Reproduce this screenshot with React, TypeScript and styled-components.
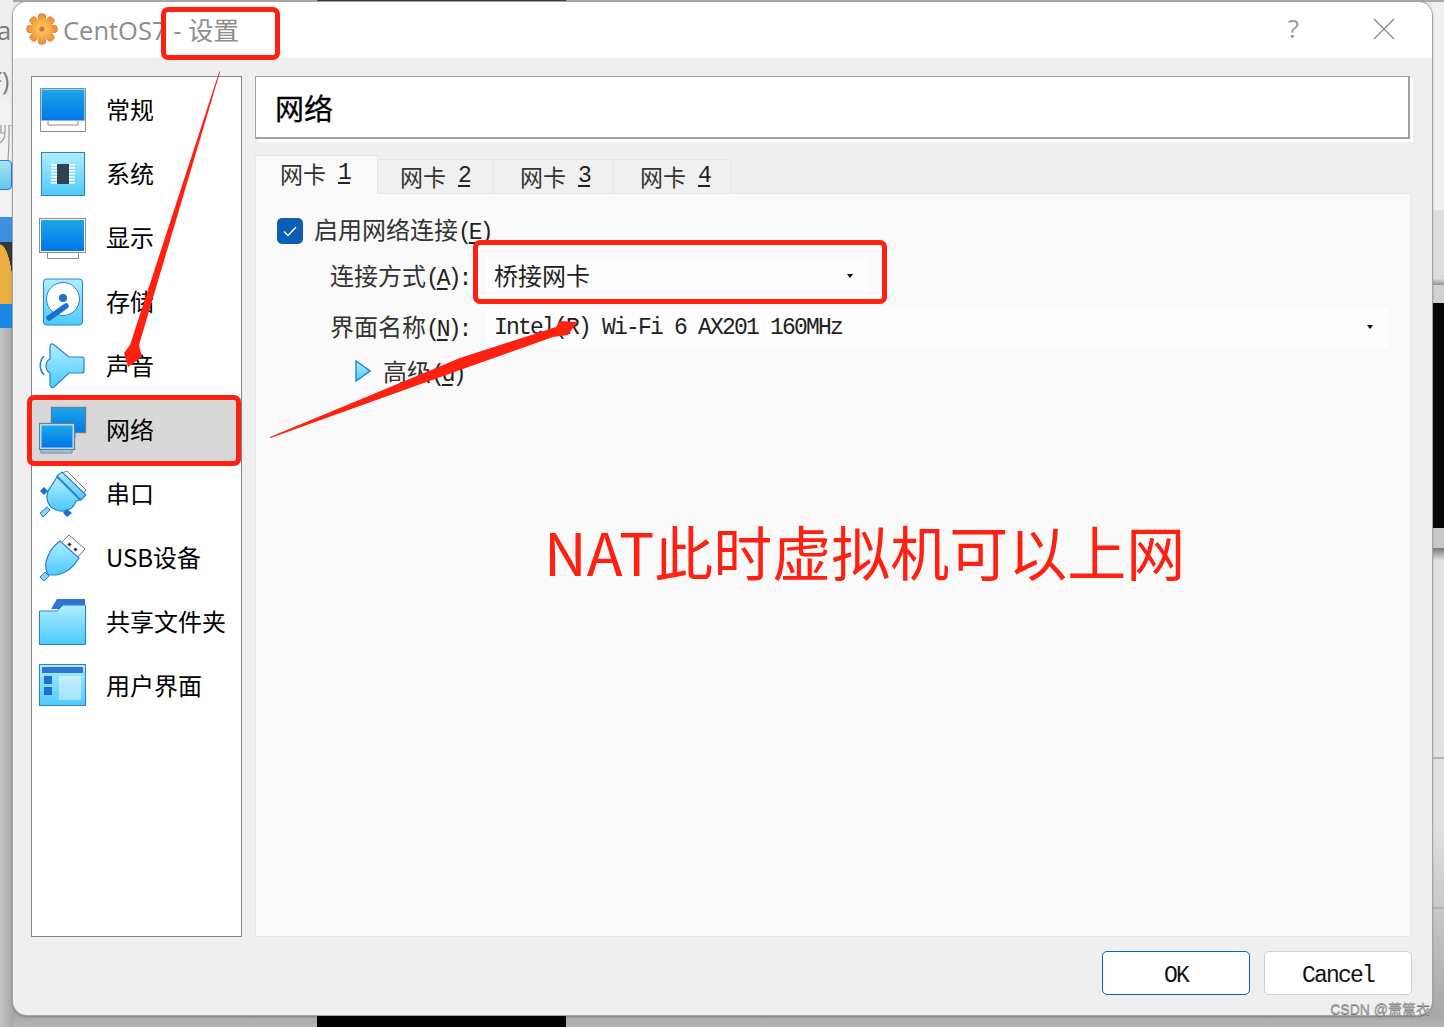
import React from "react";
import styled, { createGlobalStyle } from "styled-components";

const CJK = '"Noto Sans CJK SC", "Noto Sans", sans-serif';
const MONO = '"Liberation Mono", "Noto Sans CJK SC", monospace';

const GlobalStyle = createGlobalStyle`
  html, body { margin: 0; padding: 0; background: #c8c8c8; }
  body { font-family: ${CJK}; color: #111; }
  * { box-sizing: border-box; }
`;

const Desktop = styled.div`
  position: relative;
  width: 1444px;
  height: 1027px;
  overflow: hidden;
  padding: 2px 0 0 13px;
  background: linear-gradient(#e6e6e6, #e2e2e2 80%, #a8a8a8 98.8%, #b4b4b4);
`;

/* bits of the other windows that peek out around the dialog */
const Peek = styled.div<{ $x: number; $y: number; $w: number; $h: number; $bg: string }>`
  position: absolute;
  left: ${(p) => p.$x}px;
  top: ${(p) => p.$y}px;
  width: ${(p) => p.$w}px;
  height: ${(p) => p.$h}px;
  background: ${(p) => p.$bg};
`;

const PeekChip = styled.div`
  position: absolute;
  left: -8px;
  top: 160px;
  width: 20px;
  height: 30px;
  background: linear-gradient(#a8e4f4, #62c6ec);
  border: 1px solid #2a80d0;
  border-radius: 4px;
`;

const PeekFork = styled.svg`
  position: absolute;
  left: 0;
  top: 125px;
`;

const PeekText = styled.div<{ $y: number; $left: number }>`
  position: absolute;
  left: ${(p) => p.$left}px;
  top: ${(p) => p.$y}px;
  font: 25px "Open Sans", sans-serif;
  line-height: 30px;
  color: #7d7d7d;
  white-space: nowrap;
`;

const Window = styled.div`
  position: relative;
  display: flex;
  flex-direction: column;
  width: 1419px;
  height: 1013px;
  border-radius: 14px;
  overflow: hidden;
  background: #efefef;
  box-shadow: 0 0 0 1px #a4a4a4, 0 1px 2px 1px rgba(0, 0, 0, 0.25);
`;

const TitleBar = styled.header`
  display: flex;
  align-items: center;
  height: 56px;
  padding: 0 37px 2px 13px;
  background: #ffffff;
  color: #8d8d8d;
  font-family: "Open Sans", ${CJK};
  font-size: 25.5px;
`;

const TitleText = styled.span`
  margin-left: 5px;
  padding-bottom: 2px;
  white-space: pre;
`;

const TitleButtons = styled.div`
  display: flex;
  align-items: center;
  gap: 74px;
  margin-left: auto;
`;

const HelpMark = styled.span`
  padding-bottom: 3px;
  font-size: 26px;
  color: #9a9a9a;
`;

const Body = styled.main`
  flex: 1;
  display: flex;
  gap: 13px;
  padding: 18px 21px 0 18px;
  min-height: 0;
`;

const Sidebar = styled.nav`
  width: 211px;
  padding-top: 1px;
  background: #ffffff;
  border: 1px solid #80848c;
`;

const NavItem = styled.div<{ $active?: boolean }>`
  display: flex;
  align-items: center;
  gap: 19px;
  height: 64px;
  padding-left: 7px;
  font-size: 24px;
  background: ${(p) => (p.$active ? "#d8d8d8" : "transparent")};
  color: #000;
`;

const NavLabel = styled.span`
  padding-bottom: 4px;
`;

const Main = styled.section`
  flex: 1;
  display: flex;
  flex-direction: column;
  min-width: 0;
`;

const PageHeader = styled.div`
  display: flex;
  align-items: center;
  width: 1155px;
  height: 63px;
  padding-left: 19px;
  background: #ffffff;
  border: solid #a0a0a0;
  border-width: 1px 2px 2px 1px;
  box-shadow: 3px 3px 0 #ffffff;
  font-size: 29px;
  -webkit-text-stroke: 0.3px #000;
  color: #000;
`;

const TabBar = styled.div`
  display: flex;
  align-items: flex-end;
  height: 38px;
  margin-top: 16px;
  position: relative;
  z-index: 1;
`;

const Tab = styled.div<{ $active?: boolean; $w: number; $pad: number }>`
  display: flex;
  align-items: center;
  gap: 12px;
  width: ${(p) => p.$w}px;
  height: ${(p) => (p.$active ? "39px" : "35px")};
  margin-bottom: -1px;
  padding: 0 0 ${(p) => (p.$active ? "4px" : "1px")} ${(p) => p.$pad}px;
  background: ${(p) => (p.$active ? "#f9f9f9" : "#f0f0f0")};
  border: 1px solid #e6e6e6;
  border-left-width: ${(p) => (p.$active ? "1px" : "0")};
  border-bottom-color: ${(p) => (p.$active ? "#f9f9f9" : "#e6e6e6")};
  font-size: 23px;
  color: #333;
`;

const Hot = styled.span<{ $tight?: boolean }>`
  font-family: ${MONO};
  font-size: 23px;
  letter-spacing: ${(p) => (p.$tight ? "-3px" : "-1.8px")};
  color: #222;
  & u {
    text-underline-offset: 3px;
  }
`;

const Panel = styled.div`
  flex: 1;
  display: flex;
  flex-direction: column;
  padding: 23px 22px 0 21px;
  background: #f9f9f9;
  border: 1px solid #e6e6e6;
  font-size: 24px;
  color: #333;
`;

const CheckRow = styled.label`
  display: flex;
  align-items: center;
  gap: 11px;
  height: 27px;
`;

const CheckBox = styled.span`
  display: flex;
  align-items: center;
  justify-content: center;
  width: 26px;
  height: 26px;
  border-radius: 5px;
  background: #0a5fb4;
`;

const Caption = styled.span`
  padding-bottom: 4px;
  white-space: nowrap;
`;

const FieldRow = styled.div<{ $gap: number }>`
  display: flex;
  align-items: center;
  margin-top: ${(p) => p.$gap}px;
  padding-left: 53px;
`;

const FieldLabel = styled(Caption)`
  width: 156px;
`;

const Combo = styled.div<{ $wide?: boolean }>`
  position: relative;
  display: flex;
  align-items: center;
  justify-content: space-between;
  flex: ${(p) => (p.$wide ? "1" : "none")};
  width: ${(p) => (p.$wide ? "auto" : "382px")};
  height: ${(p) => (p.$wide ? "38px" : "39px")};
  padding: 0 15px 0 8px;
  background: #fdfdfd;
  color: #222;
`;

const ComboValue = styled.span<{ $mono?: boolean }>`
  font-family: ${(p) => (p.$mono ? MONO : CJK)};
  font-size: ${(p) => (p.$mono ? "23px" : "24px")};
  letter-spacing: ${(p) => (p.$mono ? "-1.8px" : "0")};
  padding-bottom: ${(p) => (p.$mono ? "0" : "4px")};
  white-space: pre;
`;

const ComboArrow = styled.span`
  width: 0;
  height: 0;
  border: 3px solid transparent;
  border-top: 4px solid #000;
  border-bottom: 0;
  margin-top: -2px;
`;

const Expander = styled.div`
  display: flex;
  align-items: center;
  gap: 12px;
  margin-top: 6px;
  padding-left: 78px;
`;

const ExpanderLabel = styled(Caption)`
  padding-bottom: 0;
`;

const Footer = styled.footer`
  display: flex;
  justify-content: flex-end;
  gap: 14px;
  height: 78px;
  padding: 14px 20px 20px 0;
`;

const DialogButton = styled.button<{ $primary?: boolean }>`
  width: 148px;
  height: 44px;
  padding: 5px 0 0;
  background: #ffffff;
  border: 1px solid ${(p) => (p.$primary ? "#0067c0" : "#d0d0d0")};
  border-radius: 5px;
  font-family: ${MONO};
  font-size: 23px;
  letter-spacing: -1.8px;
  color: #111;
`;

const Annotations = styled.div`
  position: absolute;
  inset: 0;
  z-index: 5;
  pointer-events: none;
`;

const RedBox = styled.div<{ $x: number; $y: number; $w: number; $h: number }>`
  position: absolute;
  left: ${(p) => p.$x}px;
  top: ${(p) => p.$y}px;
  width: ${(p) => p.$w}px;
  height: ${(p) => p.$h}px;
  border: 5px solid #fe2010;
  border-radius: 7px;
`;

const ArrowLayer = styled.svg`
  position: absolute;
  inset: 0;
`;

const BigNote = styled.div`
  position: absolute;
  left: 544px;
  top: 511px;
  font-family: ${CJK};
  font-size: 59px;
  line-height: 80px;
  color: #fe2010;
  white-space: nowrap;
`;

const Watermark = styled.div`
  position: absolute;
  right: 14px;
  bottom: 9px;
  font: 14px "Liberation Sans", ${CJK};
  color: #a6a6a6;
  text-shadow: 0 1px 0 #777;
  white-space: nowrap;
`;

const Ico = styled.svg`
  flex: none;
  display: block;
`;

const Defs = () => (
  <svg width="0" height="0" style={{ position: "absolute" }}>
    <defs>
      <linearGradient id="screen" x1="0" y1="0" x2="0" y2="1">
        <stop offset="0" stopColor="#1ca6e6" />
        <stop offset="1" stopColor="#0076ea" />
      </linearGradient>
      <linearGradient id="sky" x1="0" y1="0" x2="0" y2="1">
        <stop offset="0" stopColor="#b0eeff" />
        <stop offset="1" stopColor="#4ccafc" />
      </linearGradient>
      <linearGradient id="pale" x1="0" y1="0" x2="0" y2="1">
        <stop offset="0" stopColor="#c4f0fc" />
        <stop offset="1" stopColor="#a0e4fc" />
      </linearGradient>
      <radialGradient id="gear" cx="0.5" cy="0.5" r="0.6">
        <stop offset="0" stopColor="#f8d070" />
        <stop offset="1" stopColor="#f29a32" />
      </radialGradient>
    </defs>
  </svg>
);

const GeneralIcon = () => (
  <Ico width="48" height="48" viewBox="0 0 48 48">
    <path d="M1.5 2.5h45v43h-45z" fill="#fff" stroke="#8a8a8a" />
    <rect x="2.5" y="3.5" width="43" height="31" fill="url(#screen)" />
    <path d="M9 35v4h30v-4" fill="none" stroke="#8a8a8a" />
  </Ico>
);

const SystemIcon = () => (
  <Ico width="48" height="48" viewBox="0 0 48 48">
    <rect x="2.5" y="2.5" width="43" height="43" fill="url(#sky)" stroke="#2a80d0" />
    {[15, 18, 21, 24, 27, 30, 33].map((y) => (
      <rect key={y} x="12" y={y - 1} width="24" height="1.6" fill="#ffffff" />
    ))}
    <rect x="18" y="14" width="12" height="20" fill="#35404e" />
  </Ico>
);

const DisplayIcon = () => (
  <Ico width="48" height="48" viewBox="0 0 48 48">
    <path d="M8.5 38v6.5h31V38" fill="#fff" stroke="#8a8a8a" />
    <rect x="0.5" y="4.5" width="46" height="34" fill="#fff" stroke="#8a8a8a" />
    <rect x="2" y="6" width="43" height="31" fill="url(#screen)" />
  </Ico>
);

const StorageIcon = () => (
  <Ico width="48" height="48" viewBox="0 0 48 48">
    <rect x="4.5" y="1" width="39" height="46" rx="3" fill="url(#sky)" stroke="#2a80d0" />
    <circle cx="24" cy="21" r="16.5" fill="#fff" stroke="#2a80d0" />
    <circle cx="24" cy="20" r="4" fill="#1a6fd0" />
    <path d="M10 40 L27 28" stroke="#1a6fd0" strokeWidth="5.5" strokeLinecap="round" />
  </Ico>
);

const AudioIcon = () => (
  <Ico width="48" height="48" viewBox="0 0 48 48">
    <path d="M5 14 A14 14 0 0 0 5 33" fill="none" stroke="#2a80d0" strokeWidth="1.6" />
    <path
      d="M11 17 V5 Q11 1 14 2 L30 15 H43 Q45 15 45 17 V29 Q45 31 43 31 H30 L15 45 Q11 47 11 42 V31 Q7 29 7 24 Q7 19 11 17z"
      fill="url(#sky)"
      stroke="#2a80d0"
      strokeWidth="1.2"
    />
  </Ico>
);

const NetworkIcon = () => (
  <Ico width="48" height="48" viewBox="0 0 48 48">
    <rect x="12.5" y="1.5" width="34" height="25" fill="url(#screen)" stroke="#5f7f98" strokeWidth="1.4" />
    <path d="M36 27v4h-4" fill="#c4d8e4" stroke="#8aa0b0" strokeWidth="1.4" />
    <path d="M2 44v3h31v-3" fill="#a8c4d8" stroke="#6b8aa0" />
    <rect x="0.5" y="17.5" width="35" height="26" fill="#c8e0ee" stroke="#5f7f98" strokeWidth="1.2" />
    <rect x="2.5" y="19.5" width="31" height="22" fill="url(#screen)" />
  </Ico>
);

const SerialIcon = () => (
  <Ico width="48" height="48" viewBox="0 0 48 48">
    <path d="M23 3 L28 1 L47 20 L43 25z" fill="#fff" stroke="#777" />
    <path d="M18 6 L23 2 L47 25 L42 30z" fill="url(#sky)" stroke="#2a80d0" strokeWidth="1.2" />
    <path
      d="M18 7 L41 30 L37 31 Q33 42 21 41 Q9 39 8 28 Q8 21 11 18z"
      fill="url(#sky)"
      stroke="#2a80d0"
      strokeWidth="1.2"
    />
    <path d="M1 21 L5 17 L9 21 L5 25z M24 43 L28 39 L33 43 L28 47z" fill="#1a6fd0" />
    <path d="M1 43 L8 37 L11 40 L4 47z" fill="#7fd8fc" stroke="#2a80d0" />
  </Ico>
);

const UsbIcon = () => (
  <Ico width="48" height="48" viewBox="0 0 48 48">
    <path d="M30 1 L46 15 L37 25 L21 10z" fill="#fff" stroke="#777" />
    <rect x="29" y="9" width="3" height="3" fill="#333" transform="rotate(45 30.5 10.5)" />
    <rect x="35" y="14" width="3" height="3" fill="#333" transform="rotate(45 36.5 15.5)" />
    <path
      d="M21 7 L40 24 Q32 38 18 41 L9 41 Q6 34 7 28 Q10 15 21 7z"
      fill="url(#sky)"
      stroke="#2a80d0"
      strokeWidth="1.2"
    />
    <path d="M1 43 L6 38 L10 42 L5 47z" fill="#7fd8fc" stroke="#2a80d0" />
  </Ico>
);

const FolderIcon = () => (
  <Ico width="48" height="48" viewBox="0 0 48 48">
    <path d="M18 1 H46 V11 H12z" fill="#2f74cf" />
    <path d="M0.5 13 H18 L24 7 H46.5 V46.5 H0.5z" fill="url(#sky)" stroke="#2a80d0" />
  </Ico>
);

const InterfaceIcon = () => (
  <Ico width="48" height="48" viewBox="0 0 48 48">
    <rect x="0.5" y="2.5" width="46" height="41" fill="url(#sky)" stroke="#2a80d0" />
    <rect x="3" y="5" width="41" height="6" fill="#2f74cf" />
    <rect x="5" y="14" width="8" height="8" fill="#1a6fd0" />
    <rect x="5" y="25" width="8" height="8" fill="#1a6fd0" />
    <rect x="20" y="14" width="22" height="24" fill="url(#pale)" />
  </Ico>
);

const GearIcon = () => (
  <Ico width="32" height="32" viewBox="0 0 32 32">
    {[0, 45, 90, 135, 180, 225, 270, 315].map((a) => (
      <rect
        key={a}
        x="12.5"
        y="0.8"
        width="7"
        height="8"
        rx="2.5"
        fill="#f0983a"
        stroke="#d9702a"
        strokeWidth="0.8"
        transform={`rotate(${a} 16 16)`}
      />
    ))}
    <circle cx="16" cy="16" r="11" fill="url(#gear)" />
    <circle cx="16" cy="16" r="2.6" fill="#d9702a" />
  </Ico>
);

const navItems = [
  { label: "常规", icon: <GeneralIcon /> },
  { label: "系统", icon: <SystemIcon /> },
  { label: "显示", icon: <DisplayIcon /> },
  { label: "存储", icon: <StorageIcon /> },
  { label: "声音", icon: <AudioIcon /> },
  { label: "网络", icon: <NetworkIcon />, active: true },
  { label: "串口", icon: <SerialIcon /> },
  { label: "USB设备", icon: <UsbIcon /> },
  { label: "共享文件夹", icon: <FolderIcon /> },
  { label: "用户界面", icon: <InterfaceIcon /> },
];

const tabs = [
  { n: "1", w: 123, pad: 24, active: true },
  { n: "2", w: 116, pad: 22 },
  { n: "3", w: 120, pad: 26 },
  { n: "4", w: 117, pad: 26 },
];

function App() {
  return (
    <>
      <GlobalStyle />
      <Defs />
      <Desktop>
        <Peek $x={0} $y={0} $w={1444} $h={2} $bg="#a8a8a8" />
        <Peek $x={317} $y={0} $w={249} $h={2} $bg="#3a3a3a" />
        <Peek $x={0} $y={0} $w={13} $h={102} $bg="#efefef" />
        <Peek $x={0} $y={102} $w={13} $h={115} $bg="#f2f2f2" />
        <PeekFork width="13" height="36" viewBox="0 0 13 36">
          <path d="M1 0 V8 H5 V0 M5 8 Q5 14 0 18 M9 0 V10 Q9 18 8 36 M13 0 H9" fill="none" stroke="#9a9a9a" strokeWidth="1.2" />
        </PeekFork>
        <PeekChip />
        <Peek $x={0} $y={217} $w={13} $h={25} $bg="#3f8fe0" />
        <Peek $x={0} $y={242} $w={13} $h={62} $bg="radial-gradient(ellipse 14px 60px at 0 100%, #e8b040 98%, #33363f)" />
        <Peek $x={0} $y={304} $w={13} $h={24} $bg="#1a88e0" />
        <Peek $x={0} $y={328} $w={13} $h={699} $bg="linear-gradient(90deg, #c4c4c4, #a8a8a8)" />
        <Peek $x={1432} $y={2} $w={12} $h={208} $bg="#f0f0f0" />
        <Peek $x={1432} $y={210} $w={12} $h={76} $bg="linear-gradient(#dedede 90%, #888)" />
        <Peek $x={1432} $y={285} $w={12} $h={18} $bg="#d0d0d0" />
        <Peek $x={1432} $y={303} $w={12} $h={225} $bg="#060606" />
        <Peek $x={1432} $y={528} $w={12} $h={20} $bg="#c8c8c8" />
        <Peek $x={1432} $y={548} $w={12} $h={12} $bg="linear-gradient(#777, #dedede)" />
        <Peek $x={1432} $y={757} $w={12} $h={2} $bg="#b4b4b4" />
        <Peek $x={1432} $y={907} $w={12} $h={2} $bg="#b4b4b4" />
        <Peek $x={317} $y={1015} $w={249} $h={12} $bg="#000" />
        <PeekText $y={15} $left={-13}>ra</PeekText>
        <PeekText $y={65} $left={-11}>F)</PeekText>

        <Window>
          <TitleBar>
            <GearIcon />
            <TitleText>CentOS7 - 设置</TitleText>
            <TitleButtons>
              <HelpMark>?</HelpMark>
              <svg width="22" height="22" viewBox="0 0 22 22">
                <path d="M1 1 L21 21 M21 1 L1 21" stroke="#8a8a8a" strokeWidth="1.4" />
              </svg>
            </TitleButtons>
          </TitleBar>
          <Body>
            <Sidebar>
              {navItems.map((item) => (
                <NavItem key={item.label} $active={item.active}>
                  {item.icon}
                  <NavLabel>{item.label}</NavLabel>
                </NavItem>
              ))}
            </Sidebar>
            <Main>
              <PageHeader>网络</PageHeader>
              <TabBar>
                {tabs.map((t) => (
                  <Tab key={t.n} $active={t.active} $w={t.w} $pad={t.pad}>
                    网卡
                    <Hot>
                      <u>{t.n}</u>
                    </Hot>
                  </Tab>
                ))}
              </TabBar>
              <Panel>
                <CheckRow>
                  <CheckBox>
                    <svg width="16" height="14" viewBox="0 0 16 14">
                      <path d="M2 7.5 L6 11.5 L14 3" fill="none" stroke="#fff" strokeWidth="1.4" />
                    </svg>
                  </CheckBox>
                  <Caption>
                    启用网络连接
                    <Hot $tight>
                      (<u>E</u>)
                    </Hot>
                  </Caption>
                </CheckRow>
                <FieldRow $gap={13}>
                  <FieldLabel>
                    连接方式
                    <Hot $tight>
                      (<u>A</u>):
                    </Hot>
                  </FieldLabel>
                  <Combo>
                    <ComboValue>桥接网卡</ComboValue>
                    <ComboArrow />
                  </Combo>
                </FieldRow>
                <FieldRow $gap={12}>
                  <FieldLabel>
                    界面名称
                    <Hot $tight>
                      (<u>N</u>):
                    </Hot>
                  </FieldLabel>
                  <Combo $wide>
                    <ComboValue $mono>Intel(R) Wi-Fi 6 AX201 160MHz</ComboValue>
                    <ComboArrow />
                  </Combo>
                </FieldRow>
                <Expander>
                  <svg width="16" height="22" viewBox="0 0 16 22">
                    <path d="M1 1 L15 11 L1 21z" fill="url(#sky)" stroke="#2a80d0" strokeWidth="1.4" />
                  </svg>
                  <ExpanderLabel>
                    高级
                    <Hot $tight>
                      (<u>d</u>)
                    </Hot>
                  </ExpanderLabel>
                </Expander>
              </Panel>
            </Main>
          </Body>
          <Footer>
            <DialogButton $primary>OK</DialogButton>
            <DialogButton>Cancel</DialogButton>
          </Footer>
        </Window>

        <Annotations>
          <RedBox $x={161} $y={7} $w={119} $h={53} />
          <RedBox $x={27} $y={395} $w={214} $h={71} />
          <RedBox $x={473} $y={240} $w={414} $h={64} />
          <ArrowLayer width="1444" height="1027" viewBox="0 0 1444 1027">
            <path d="M220 72 L139 345 L142 357 L128 367 L124 353 L130 345 L219.4 71z" fill="#fe2010" />
            <path d="M270 437 L460 358 L556 327 L560 321 L577 322 L568 335 L553 337 L460 370 L270.5 438z" fill="#fe2010" />
          </ArrowLayer>
          <BigNote>NAT此时虚拟机可以上网</BigNote>
        </Annotations>
        <Watermark>CSDN @萧篱衣</Watermark>
      </Desktop>
    </>
  );
}

export default App;
